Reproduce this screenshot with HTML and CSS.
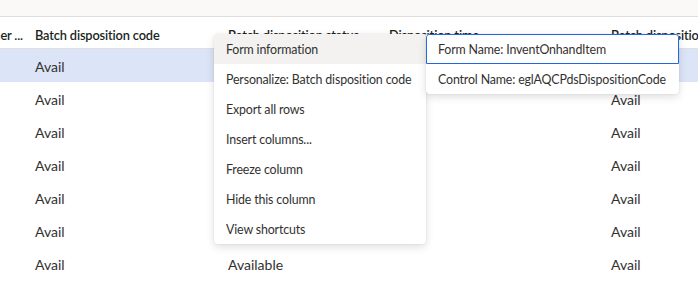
FILE: index.html
```html
<!DOCTYPE html>
<html lang="en">

<head>
  <meta charset="UTF-8">
  <meta name="viewport" content="width=device-width, initial-scale=1.0">
  <title>Batch disposition</title>
  <link rel="stylesheet" href="styles.css">
</head>

<body>
  <div class="page">
    <div class="top-strip"></div>
    <div class="grid">
      <div class="row head">
        <div class="cell c0">Owner ...</div>
        <div class="cell c1">Batch disposition code</div>
        <div class="cell c2">Batch disposition status</div>
        <div class="cell c3">Disposition time</div>
        <div class="cell c4">Batch disposition status</div>
      </div>
      <div class="row selected">
        <div class="cell c0"></div>
        <div class="cell c1">Avail</div>
        <div class="cell c2">Available</div>
        <div class="cell c3"></div>
        <div class="cell c4">Avail</div>
      </div>
      <div class="row">
        <div class="cell c0"></div>
        <div class="cell c1">Avail</div>
        <div class="cell c2">Available</div>
        <div class="cell c3"></div>
        <div class="cell c4">Avail</div>
      </div>
      <div class="row">
        <div class="cell c0"></div>
        <div class="cell c1">Avail</div>
        <div class="cell c2">Available</div>
        <div class="cell c3"></div>
        <div class="cell c4">Avail</div>
      </div>
      <div class="row">
        <div class="cell c0"></div>
        <div class="cell c1">Avail</div>
        <div class="cell c2">Available</div>
        <div class="cell c3"></div>
        <div class="cell c4">Avail</div>
      </div>
      <div class="row">
        <div class="cell c0"></div>
        <div class="cell c1">Avail</div>
        <div class="cell c2">Available</div>
        <div class="cell c3"></div>
        <div class="cell c4">Avail</div>
      </div>
      <div class="row">
        <div class="cell c0"></div>
        <div class="cell c1">Avail</div>
        <div class="cell c2">Available</div>
        <div class="cell c3"></div>
        <div class="cell c4">Avail</div>
      </div>
      <div class="row">
        <div class="cell c0"></div>
        <div class="cell c1">Avail</div>
        <div class="cell c2">Available</div>
        <div class="cell c3"></div>
        <div class="cell c4">Avail</div>
      </div>
    </div>

    <!-- context menu -->
    <ul class="menu">
      <li class="hover">Form information</li>
      <li>Personalize: Batch disposition code</li>
      <li>Export all rows</li>
      <li>Insert columns...</li>
      <li>Freeze column</li>
      <li>Hide this column</li>
      <li>View shortcuts</li>
    </ul>

    <!-- form information flyout -->
    <ul class="menu sub">
      <li class="focus">Form Name: InventOnhandItem</li>
      <li>Control Name: eglAQCPdsDispositionCode</li>
    </ul>
  </div>
</body>

</html>
```

FILE: styles.css
```css
* {
  margin: 0;
  padding: 0;
  box-sizing: border-box;
}

li {
  list-style: none;
}

body {
  background-color: #fff;
  font-family: "Segoe UI", Lato, "Liberation Sans", sans-serif;
  color: #323130;
  overflow: hidden;
}

.page {
  position: relative;
  width: 698px;
  height: 284px;
  overflow: hidden;
}

.top-strip {
  height: 17px;
  background-color: #faf9f8;
  border-bottom: 1px solid #e1dfdd;
}

.row {
  display: flex;
  height: 33px;
  align-items: center;
  white-space: nowrap;
  padding-top: 1px;
}

.row.head {
  height: 32px;
  border-bottom: 1px solid #e1dfdd;
  padding-top: 5px;
}

.row.selected {
  background-color: #dce4f7;
}

.cell {
  flex: none;
  overflow: hidden;
  padding-left: 12px;
  font-size: 14px;
}

.row.head .cell {
  font-size: 12.8px;
  letter-spacing: -0.15px;
  font-weight: 600;
  color: #201f1e;
}

.c0 {
  width: 23px;
  padding-left: 0;
  display: flex;
  justify-content: flex-end;
}

.c1 {
  width: 193px;
}

.c2 {
  width: 161px;
}

.c3 {
  width: 222px;
}

.c4 {
  width: 99px;
}

.menu {
  position: absolute;
  left: 214px;
  top: 34px;
  width: 212px;
  background-color: #fff;
  border-radius: 4px;
  box-shadow: 0 3px 8px rgba(0, 0, 0, 0.13), 0 0 2px rgba(0, 0, 0, 0.1);
  font-size: 12.4px;
  letter-spacing: -0.15px;
  overflow: hidden;
}

.menu li {
  height: 30px;
  line-height: 28px;
  padding-top: 2px;
  padding-left: 12px;
  white-space: nowrap;
}

.menu li.hover {
  background-color: #f3f2f1;
}

.menu.sub {
  left: 426px;
  width: 253px;
}

.menu.sub li.focus {
  border: 1px solid #2266e3;
  line-height: 26px;
  padding-left: 11px;
  border-radius: 3px 3px 0 0;
}
```
